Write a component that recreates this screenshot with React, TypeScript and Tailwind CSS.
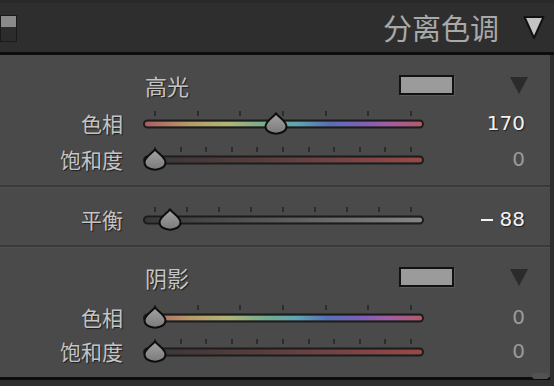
import React from 'react';

const cjk = "font-['Noto_Sans_CJK_SC',sans-serif]";
const num = "font-['DejaVu_Sans','Liberation_Sans',sans-serif]";
const shadow = '[text-shadow:1px_1px_1px_#1e1e1e]';

const hueGradient =
  'linear-gradient(to right, #ad5c62 0%, #b99a66 16%, #afb574 30%, #73ac90 44%, #5ca6b4 55%, #5670b8 66%, #7a60ba 77%, #a35ca6 88%, #b45a68 100%)';
const satGradient = 'linear-gradient(to right, #393636 0%, #573c3c 40%, #9a4848 100%)';
const balGradient = 'linear-gradient(to right, #383838 0%, #5c5c5c 50%, #858585 100%)';

const Thumb: React.FC<{ left: number }> = ({ left }) => (
  <svg
    width="24"
    height="24"
    viewBox="0 0 24 24"
    className="absolute top-1/2 -translate-x-1/2 -translate-y-[48%]"
    style={{ left }}
  >
    <defs>
      <linearGradient id="thumbFill" x1="0" y1="0" x2="0" y2="1">
        <stop offset="0" stopColor="#a4a4a4" />
        <stop offset="1" stopColor="#7a7a7a" />
      </linearGradient>
    </defs>
    <path
      d="M12 1.8 C14.2 5.5 22.5 9.8 22.5 15 C22.5 19.3 17.8 22.2 12 22.2 C6.2 22.2 1.5 19.3 1.5 15 C1.5 9.8 9.8 5.5 12 1.8 Z"
      fill="url(#thumbFill)"
      stroke="#0d0d0d"
      strokeWidth="2"
      strokeLinejoin="round"
    />
  </svg>
);

const Slider: React.FC<{ gradient: string; ticks: number; pos: number }> = ({ gradient, ticks, pos }) => {
  const start = 12;
  const span = 256;
  return (
    <div className="relative w-[281px] h-full flex items-center">
      {Array.from({ length: ticks }).map((_, i) => (
        <div
          key={i}
          className="absolute w-[2px] h-[5px] bg-[#2c2c2c] top-1/2 -translate-y-[12px]"
          style={{ left: start + (span * i) / (ticks - 1) - 1 }}
        />
      ))}
      <div
        className="w-full h-[9px] rounded-full border-2 border-[#1c1c1c] translate-y-[0.5px]"
        style={{ background: gradient }}
      />
      <Thumb left={start + span * pos} />
    </div>
  );
};

const SliderRow: React.FC<{
  label: string;
  value: React.ReactNode;
  bright?: boolean;
  gradient: string;
  ticks: number;
  pos: number;
  h: string;
}> = ({ label, value, bright, gradient, ticks, pos, h }) => (
  <div className={`flex items-center ${h}`}>
    <div className={`w-[123px] text-right text-[21px] leading-none text-[#c4c4c4] ${cjk} ${shadow}`}>{label}</div>
    <div className="ml-[20px] h-full">
      <Slider gradient={gradient} ticks={ticks} pos={pos} />
    </div>
    <div
      className={`w-[101px] text-right text-[20px] leading-none ${num} ${
        bright ? `text-[#f2f2f2] ${shadow}` : 'text-[#9a9a9a]'
      }`}
    >
      {value}
    </div>
  </div>
);

const SectionTitle: React.FC<{ title: string }> = ({ title }) => (
  <div className="flex items-center h-[36px]">
    <div className="w-[143px]" />
    <div className={`w-[256px] pl-[2px] text-[22px] leading-none text-[#c4c4c4] ${cjk} ${shadow}`}>{title}</div>
    <div className="w-[55px] h-[20px] bg-[#9b9b9b] border-2 border-[#121212] shadow-[1px_1px_0_#5a5a5a]" />
    <div className="w-[56px]" />
    <svg width="18" height="17" viewBox="0 0 18 17">
      <path d="M0 0 L18 0 L9 17 Z" fill="#2b2b2b" />
    </svg>
  </div>
);

const Separator: React.FC = () => (
  <div>
    <div className="h-[2px] bg-[#3a3a3a]" />
    <div className="h-px bg-[#505050]" />
  </div>
);

export default function App() {
  return (
    <div className="w-[554px] h-[386px] bg-[#2e2e2e] overflow-hidden relative">
      {/* header */}
      <div className="h-[52px] flex items-center border-t-[3px] border-[#292929]">
        <div className="w-[17px] h-[27px] mt-[1px] border border-[#1a1a1a] flex flex-col">
          <div className="h-[11px] bg-[#8a8a8a]" />
          <div className="flex-1 bg-[#2c2c2c]" />
        </div>
        <div className="flex-1" />
        <div className={`text-[29px] leading-none text-[#a9a9a9] ${cjk} mr-[24px] -mt-[1px]`}>分离色调</div>
        <svg width="22" height="25" viewBox="0 0 22 25" className="mr-[9px]">
          <path d="M1.5 2 L20.5 2 L11 23 Z" fill="#c4c4c4" stroke="#111" strokeWidth="2" strokeLinejoin="round" />
        </svg>
      </div>
      <div className="h-[3px] bg-[#0c0c0c]" />

      {/* body */}
      <div className="w-[550px] bg-[#4a4a4a] flex flex-col pt-[12px] pb-[9px] border-b-[3px] border-[#0c0c0c]">
        <SectionTitle title="高光" />
        <div className="mt-[2px]">
          <SliderRow label="色相" value="170" bright gradient={hueGradient} ticks={7} pos={170 / 360} h="h-[36px]" />
          <SliderRow label="饱和度" value="0" gradient={satGradient} ticks={11} pos={0} h="h-[36px]" />
        </div>
        <div className="mt-[8px]">
          <Separator />
        </div>
        <div className="pt-[13px] pb-[8px]">
          <SliderRow
            label="平衡"
            value={
              <span>
                <span className="inline-block w-[12px] h-[2px] bg-[#f2f2f2] align-middle mr-[7px] -mt-[2px]" />
                88
              </span>
            }
            bright
            gradient={balGradient}
            ticks={9}
            pos={6 / 100}
            h="h-[36px]"
          />
        </div>
        <Separator />
        <div className="pt-[11px]">
          <SectionTitle title="阴影" />
        </div>
        <div className="mt-[5px]">
          <SliderRow label="色相" value="0" gradient={hueGradient} ticks={7} pos={0} h="h-[34px]" />
          <SliderRow label="饱和度" value="0" gradient={satGradient} ticks={11} pos={0} h="h-[34px]" />
        </div>
      </div>
      <div className="absolute right-[5px] bottom-[7px] w-[17px] h-[6px] rounded-full bg-[#525252]" />
    </div>
  );
}
